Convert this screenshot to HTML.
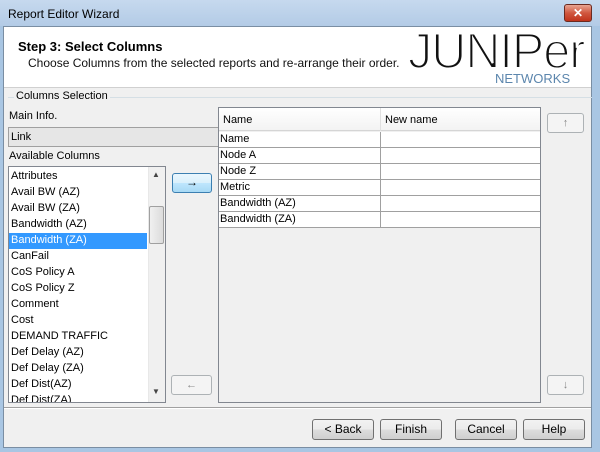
<!DOCTYPE html>
<html><head><style>
*{margin:0;padding:0;box-sizing:border-box}
body{width:600px;height:452px;position:relative;overflow:hidden;font-family:"Liberation Sans",sans-serif;font-size:11px;color:#000;background:#a9c6e3}
.a{position:absolute}
.btn{position:absolute;border:1px solid #707070;border-radius:3px;background:linear-gradient(#f2f2f2,#ebebeb 50%,#dddddd 51%,#cfcfcf);text-align:center;font-size:12px;line-height:19px}
.dis{position:absolute;border:1px solid #adb2b5;border-radius:3px;background:#f4f4f4;text-align:center;color:#888;line-height:18px}
.row{position:absolute;left:0;height:16px;line-height:15px;padding-left:2px;white-space:nowrap}
</style></head><body>
<div class="a" style="left:0;top:0;width:600px;height:26px;background:linear-gradient(#c6d9ee,#b3cbe6);"></div>
<div class="a" style="left:8px;top:7px;font-size:12px;color:#000">Report Editor Wizard</div>
<div class="a" style="left:564px;top:4px;width:28px;height:18px;border:1px solid #6b2a20;border-radius:3px;background:linear-gradient(#e8a592,#d0573f 50%,#c0341c);color:#fff;font-weight:bold;text-align:center;line-height:16px;font-size:12px">✕</div>
<div class="a" style="left:3px;top:26px;width:589px;height:422px;background:#f0f0f0;border:1px solid #7a8ea3"></div>
<div class="a" style="left:4px;top:27px;width:587px;height:61px;background:#fff;border-bottom:1px solid #d0d0d0"></div>
<div class="a" style="left:18px;top:39px;font-size:13px;font-weight:bold">Step 3: Select Columns</div>
<div class="a" style="left:28px;top:56px;font-size:12px;color:#111">Choose Columns from the selected reports and re-arrange their order.</div>
<div class="a" style="left:408px;top:26px;font-size:50px;line-height:50px;letter-spacing:-1px;color:#111;-webkit-text-stroke:2px #fff;paint-order:normal;transform:scaleX(0.97);transform-origin:left">JUNIPer</div>
<div class="a" style="left:495px;top:71px;font-size:13px;color:#5c86ad">NETWORKS</div>
<!-- group -->
<div class="a" style="left:8px;top:97px;width:584px;height:309px;border-top:1px solid #d5dfe5"></div>
<div class="a" style="left:14px;top:90px;background:#f0f0f0;padding:0 2px">Columns Selection</div>
<div class="a" style="left:9px;top:110px">Main Info.</div>
<div class="a" style="left:8px;top:127px;width:211px;height:20px;border:1px solid #a0a0a0;background:#e6e6e6;padding:3px 2px">Link</div>
<div class="a" style="left:9px;top:150px">Available Columns</div>
<div class="a" style="left:8px;top:166px;width:158px;height:237px;border:1px solid #828790;background:#fff;overflow:hidden">
<div class="row" style="top:2px">Attributes</div>
<div class="row" style="top:18px">Avail BW (AZ)</div>
<div class="row" style="top:34px">Avail BW (ZA)</div>
<div class="row" style="top:50px">Bandwidth (AZ)</div>
<div class="row" style="top:66px;width:138px;background:#3399ff;color:#fff">Bandwidth (ZA)</div>
<div class="row" style="top:82px">CanFail</div>
<div class="row" style="top:98px">CoS Policy A</div>
<div class="row" style="top:114px">CoS Policy Z</div>
<div class="row" style="top:130px">Comment</div>
<div class="row" style="top:146px">Cost</div>
<div class="row" style="top:162px">DEMAND TRAFFIC</div>
<div class="row" style="top:178px">Def Delay (AZ)</div>
<div class="row" style="top:194px">Def Delay (ZA)</div>
<div class="row" style="top:210px">Def Dist(AZ)</div>
<div class="row" style="top:226px">Def Dist(ZA)</div>
<div class="a" style="left:139px;top:0;width:17px;height:235px;background:#f0f0f0;border-left:1px solid #e8e8e8"></div>
<div class="a" style="left:140px;top:39px;width:15px;height:38px;border:1px solid #a0a0a0;border-radius:2px;background:linear-gradient(90deg,#f0f0f0,#dcdcdc)"></div>
<div class="a" style="left:143px;top:3px;font-size:8px;color:#444">▲</div>
<div class="a" style="left:143px;top:220px;font-size:8px;color:#444">▼</div>
</div>
<div class="btn" style="left:172px;top:173px;width:40px;height:20px;border-color:#3c7fb1;background:linear-gradient(#eaf6fd,#d9f0fc 50%,#bee6fd 51%,#a7d9f5);line-height:17px">→</div>
<div class="dis" style="left:171px;top:375px;width:41px;height:20px">←</div>
<!-- table -->
<div class="a" style="left:218px;top:107px;width:323px;height:296px;border:1px solid #828790;background:#f0f0f0">
<div class="a" style="left:0;top:0;width:321px;height:23px;background:linear-gradient(#fff,#f3f3f3);border-bottom:1px solid #d5d5d5"></div>
<div class="a" style="left:161px;top:0;width:1px;height:23px;background:#e0e0e0"></div>
<div class="a" style="left:4px;top:6px">Name</div>
<div class="a" style="left:166px;top:6px">New name</div>
<div class="a" style="left:0;top:24px;width:321px;height:96px;background:#fff"></div>
<div class="a" style="left:161px;top:24px;width:1px;height:96px;background:#a0a0a0"></div>
<div class="row" style="top:24px;width:321px;border-bottom:1px solid #a0a0a0;padding-left:1px">Name</div>
<div class="row" style="top:40px;width:321px;border-bottom:1px solid #a0a0a0;padding-left:1px">Node A</div>
<div class="row" style="top:56px;width:321px;border-bottom:1px solid #a0a0a0;padding-left:1px">Node Z</div>
<div class="row" style="top:72px;width:321px;border-bottom:1px solid #a0a0a0;padding-left:1px">Metric</div>
<div class="row" style="top:88px;width:321px;border-bottom:1px solid #a0a0a0;padding-left:1px">Bandwidth (AZ)</div>
<div class="row" style="top:104px;width:321px;border-bottom:1px solid #a0a0a0;padding-left:1px">Bandwidth (ZA)</div>
</div>
<div class="dis" style="left:547px;top:113px;width:37px;height:20px">↑</div>
<div class="dis" style="left:547px;top:375px;width:37px;height:20px">↓</div>
<div class="a" style="left:4px;top:407px;width:587px;height:2px;border-top:1px solid #a0a0a0;border-bottom:1px solid #fff"></div>
<div class="btn" style="left:312px;top:419px;width:62px;height:21px">&lt; Back</div>
<div class="btn" style="left:380px;top:419px;width:62px;height:21px">Finish</div>
<div class="btn" style="left:455px;top:419px;width:62px;height:21px">Cancel</div>
<div class="btn" style="left:523px;top:419px;width:62px;height:21px">Help</div>
</body></html>
